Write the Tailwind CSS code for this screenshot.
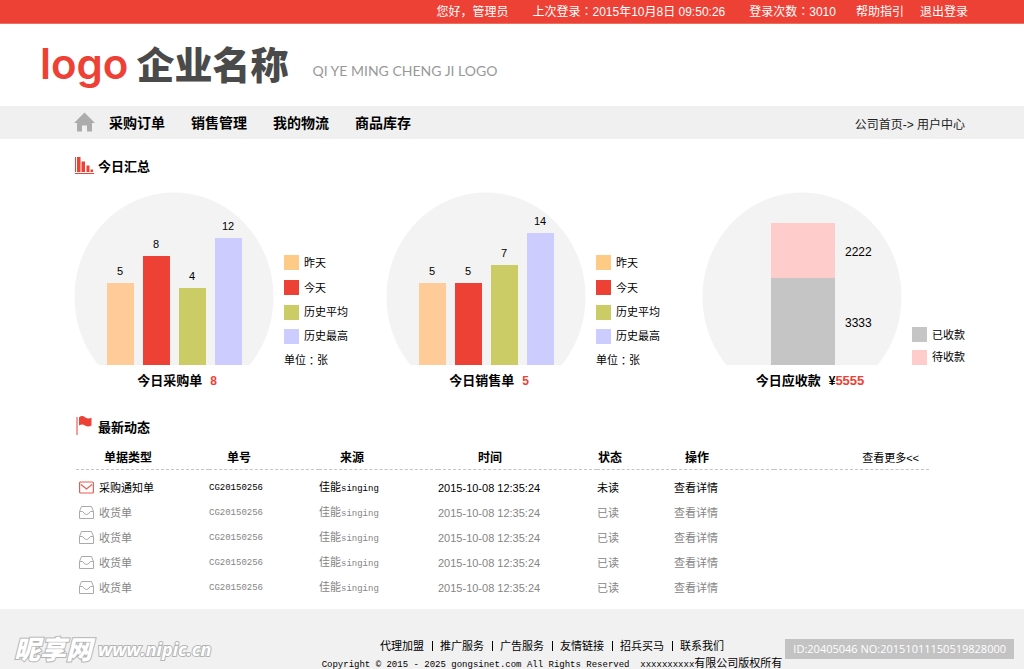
<!DOCTYPE html>
<html lang="zh-CN">
<head>
<meta charset="utf-8">
<meta name="viewport" content="width=device-width, initial-scale=1">
<title>用户中心</title>
<script src="https://cdn.jsdelivr.net/npm/@tailwindcss/browser@4"></script>
</head>
<body class="flex h-screen flex-col overflow-hidden bg-white font-['Liberation_Sans','Noto_Sans_CJK_SC',sans-serif] text-[11px] leading-4 text-black">

<svg class="hidden">
  <symbol id="tray" viewBox="0 0 15 13"><path d="M.5 5.500 2.500.5h10l2 5v7H.5ZM.5 5.500H3.500C4.500 5.500 4.800 8.500 7.500 8.500S10.500 5.500 11.500 5.500H14.500"/></symbol>
</svg>

<div class="flex h-6 shrink-0 items-center justify-end border-b border-[#f0705f] bg-[#ee4135] pr-14 text-xs text-white">
  <span class="mr-6">您好，管理员</span>
  <span class="mr-6">上次登录<span lang="zh-TW" class="font-['Noto_Sans_CJK_TC',sans-serif]">：</span>2015年10月8日 09:50:26</span>
  <span class="mr-5">登录次数<span lang="zh-TW" class="font-['Noto_Sans_CJK_TC',sans-serif]">：</span>3010</span>
  <a href="#" class="mr-4">帮助指引</a>
  <a href="#">退出登录</a>
</div>

<header class="flex h-[82px] shrink-0 items-center pl-10">
  <h1 class="flex items-center leading-none">
    <span class="pb-0.5 font-['Inter',sans-serif] text-[42px] font-semibold text-[#ee4135]">logo</span>
    <span class="ml-2 pb-1 font-['Noto_Sans_CJK_SC',sans-serif] text-[38px] font-black text-[#4a4a4a]">企业名称</span>
  </h1>
  <p class="ml-6 pt-3 font-['Lato',sans-serif] text-sm text-[#999]">QI YE MING CHENG JI LOGO</p>
</header>

<nav class="flex h-[33px] shrink-0 items-center bg-[#f0f0f0] pr-[59px] pl-[74px]">
  <a href="#" aria-label="首页" class="mr-3.5 pb-0.5">
    <svg class="h-5 w-[21px]" viewBox="0 0 21 20" fill="#acacac"><path d="M10.500.5 21 11H18V19.500H13V13.500H8V19.500H3V11H0Z"/></svg>
  </a>
  <div class="flex flex-1 gap-[26px] text-sm font-bold">
    <a href="#">采购订单</a><a href="#">销售管理</a><a href="#">我的物流</a><a href="#">商品库存</a>
  </div>
  <p class="pt-1 text-xs text-[#222]"><a href="#">公司首页</a>-&gt; <a href="#">用户中心</a></p>
</nav>

<main class="pl-[74px]">
  <section>
    <h2 class="flex h-[53px] items-center gap-1 pl-px text-[13px] font-bold">
      <svg class="h-[17px] w-[19px]" viewBox="0 0 19 17" fill="#ee4135"><path d="M0 0h1v15H0zM2 0h3.500v15H2zM6.500 4.500H10V15H6.500zM11.500 8.500h3V15h-3zM15.500 12.500h2.500V15h-2.500zM0 16h19v1H0z"/></svg>
      <span class="pt-0.5">今日汇总</span>
    </h2>
    <div class="grid grid-cols-[312fr_316fr_322fr]">
      <figure class="grid grid-cols-[200px_1fr] gap-x-2.5">
        <div class="flex h-[173px] items-end justify-center gap-[9px] bg-[radial-gradient(100px_105px_at_100px_105px,#f3f3f3_99%,transparent_100%)] text-center">
          <div class="w-[27px]">5<div class="mt-1 bg-[#ffcc99]" style="height:82px"></div></div>
          <div class="w-[27px]">8<div class="mt-1 bg-[#ee4135]" style="height:109px"></div></div>
          <div class="w-[27px]">4<div class="mt-1 bg-[#cccc66]" style="height:77px"></div></div>
          <div class="w-[27px]">12<div class="mt-1 bg-[#ccccff]" style="height:127px"></div></div>
        </div>
        <ul class="self-end">
          <li class="flex h-[25px] items-center gap-[5px]"><span class="size-[15px] bg-[#fdcb85]"></span>昨天</li>
          <li class="flex h-[25px] items-center gap-[5px]"><span class="size-[15px] bg-[#ee4135]"></span>今天</li>
          <li class="flex h-6 items-center gap-[5px]"><span class="size-[15px] bg-[#cccc66]"></span>历史平均</li>
          <li class="flex h-6 items-center gap-[5px]"><span class="size-[15px] bg-[#ccccff]"></span>历史最高</li>
          <li class="-mb-[7px] flex h-6 items-center">单位<span lang="zh-TW" class="font-['Noto_Sans_CJK_TC',sans-serif]">：</span>张</li>
        </ul>
        <figcaption class="pt-2 pl-1.5 text-center text-[13px] font-bold">今日采购单<span class="ml-2 text-xs text-[#ee4135]">8</span></figcaption>
      </figure>
      <figure class="grid grid-cols-[200px_1fr] gap-x-2.5">
        <div class="flex h-[173px] items-end justify-center gap-[9px] bg-[radial-gradient(100px_105px_at_100px_105px,#f3f3f3_99%,transparent_100%)] text-center">
          <div class="w-[27px]">5<div class="mt-1 bg-[#ffcc99]" style="height:82px"></div></div>
          <div class="w-[27px]">5<div class="mt-1 bg-[#ee4135]" style="height:82px"></div></div>
          <div class="w-[27px]">7<div class="mt-1 bg-[#cccc66]" style="height:100px"></div></div>
          <div class="w-[27px]">14<div class="mt-1 bg-[#ccccff]" style="height:132px"></div></div>
        </div>
        <ul class="self-end">
          <li class="flex h-[25px] items-center gap-[5px]"><span class="size-[15px] bg-[#fdcb85]"></span>昨天</li>
          <li class="flex h-[25px] items-center gap-[5px]"><span class="size-[15px] bg-[#ee4135]"></span>今天</li>
          <li class="flex h-6 items-center gap-[5px]"><span class="size-[15px] bg-[#cccc66]"></span>历史平均</li>
          <li class="flex h-6 items-center gap-[5px]"><span class="size-[15px] bg-[#ccccff]"></span>历史最高</li>
          <li class="-mb-[7px] flex h-6 items-center">单位<span lang="zh-TW" class="font-['Noto_Sans_CJK_TC',sans-serif]">：</span>张</li>
        </ul>
        <figcaption class="pt-2 pl-1.5 text-center text-[13px] font-bold">今日销售单<span class="ml-2 text-xs text-[#ee4135]">5</span></figcaption>
      </figure>
      <figure class="grid grid-cols-[200px_1fr] gap-x-2.5">
        <div class="flex h-[173px] flex-col justify-end bg-[radial-gradient(100px_105px_at_100px_105px,#f3f3f3_99%,transparent_100%)] pl-[69px] text-xs">
          <div class="flex items-center gap-2.5" style="height:55px"><span class="h-full w-16 bg-[#ffcccc]"></span><span class="pt-0.5">2222</span></div>
          <div class="flex items-center gap-2.5" style="height:87px"><span class="h-full w-16 bg-[#c5c5c5]"></span><span class="pt-0.5">3333</span></div>
        </div>
        <ul class="self-end">
          <li class="flex h-[23px] items-center gap-[5px]"><span class="size-[15px] bg-[#c5c5c5]"></span>已收款</li>
          <li class="flex h-[19px] items-end gap-[5px]"><span class="size-[15px] bg-[#ffcccc]"></span>待收款</li>
        </ul>
        <figcaption class="pt-2 pl-4 text-center text-[13px] font-bold">今日应收款<span class="ml-2 text-xs">¥</span><span class="text-[#ee4135]">5555</span></figcaption>
      </figure>
    </div>
  </section>

  <section class="pt-[19px]">
    <h2 class="flex h-[34px] items-center gap-1.5 pl-0.5 text-[13px] font-bold">
      <svg class="h-[19px] w-4" viewBox="0 0 16 19" fill="#ee4135"><path d="M.5 1h1v18h-1zM3 1.500C5.500-.5 7-.2 9 1.200s4 1.600 6.500.5V9.500C13 11 11 10.800 9 9.500S5.500 8 3 9.500Z"/></svg>
      <span class="pt-1.5">最新动态</span>
    </h2>
    <table class="mr-[95px] ml-0.5 w-[calc(100%-97px)] table-fixed text-left">
      <colgroup><col class="w-[133px]"><col class="w-[110px]"><col class="w-[119px]"><col class="w-[159px]"><col class="w-[77px]"><col class="w-[100px]"><col></colgroup>
      <thead>
        <tr class="h-[27px] border-b border-dashed border-[#c4c4c4] align-bottom text-xs">
          <th class="pb-[3px] pl-7">单据类型</th><th class="pb-[3px] pl-[18px]">单号</th><th class="pb-[3px] pl-[21px]">来源</th><th class="pb-[3px] pl-10">时间</th><th class="pb-[3px] pl-px">状态</th><th class="pb-[3px] pl-[11px]">操作</th>
          <td class="pr-2.5 pb-[3px] text-right text-[11px]"><a href="#">查看更多&lt;&lt;</a></td>
        </tr>
      </thead>
      <tbody class="text-[#858585]">
        <tr class="h-1.5"></tr>
        <tr class="h-[25px] text-black">
          <td><div class="flex items-center gap-[5px] pl-[3px]"><svg class="h-[13px] w-[15px]" viewBox="0 0 15 13" fill="none" stroke="#ee5a50" stroke-width="1.200"><rect x=".6" y="1" width="13.800" height="11" rx="1"/><path d="m2 3.500 5.500 4.500L13 3.500"/></svg>采购通知单</div></td>
          <td class="font-['Liberation_Mono',monospace] text-[9px]">CG20150256</td><td>佳能<span class="font-['Liberation_Mono',monospace] text-[9px]">singing</span></td><td>2015-10-08 12:35:24</td><td>未读</td><td><a href="#">查看详情</a></td><td></td>
        </tr>
        <tr class="h-[25px]">
          <td><div class="flex items-center gap-[5px] pl-[3px]"><svg class="h-[13px] w-[15px]" fill="none" stroke="#aaa"><use href="#tray"/></svg>收货单</div></td>
          <td class="font-['Liberation_Mono',monospace] text-[9px]">CG20150256</td><td>佳能<span class="font-['Liberation_Mono',monospace] text-[9px]">singing</span></td><td>2015-10-08 12:35:24</td><td>已读</td><td><a href="#">查看详情</a></td><td></td>
        </tr>
        <tr class="h-[25px]">
          <td><div class="flex items-center gap-[5px] pl-[3px]"><svg class="h-[13px] w-[15px]" fill="none" stroke="#aaa"><use href="#tray"/></svg>收货单</div></td>
          <td class="font-['Liberation_Mono',monospace] text-[9px]">CG20150256</td><td>佳能<span class="font-['Liberation_Mono',monospace] text-[9px]">singing</span></td><td>2015-10-08 12:35:24</td><td>已读</td><td><a href="#">查看详情</a></td><td></td>
        </tr>
        <tr class="h-[25px]">
          <td><div class="flex items-center gap-[5px] pl-[3px]"><svg class="h-[13px] w-[15px]" fill="none" stroke="#aaa"><use href="#tray"/></svg>收货单</div></td>
          <td class="font-['Liberation_Mono',monospace] text-[9px]">CG20150256</td><td>佳能<span class="font-['Liberation_Mono',monospace] text-[9px]">singing</span></td><td>2015-10-08 12:35:24</td><td>已读</td><td><a href="#">查看详情</a></td><td></td>
        </tr>
        <tr class="h-[25px]">
          <td><div class="flex items-center gap-[5px] pl-[3px]"><svg class="h-[13px] w-[15px]" fill="none" stroke="#aaa"><use href="#tray"/></svg>收货单</div></td>
          <td class="font-['Liberation_Mono',monospace] text-[9px]">CG20150256</td><td>佳能<span class="font-['Liberation_Mono',monospace] text-[9px]">singing</span></td><td>2015-10-08 12:35:24</td><td>已读</td><td><a href="#">查看详情</a></td><td></td>
        </tr>
      </tbody>
    </table>
  </section>
</main>

<footer class="relative mt-[9px] flex-1 bg-[#f1f1f1] pt-7 pl-20 text-center">
  <div class="flex h-[18px] items-center justify-center">
    <a href="#">代理加盟</a><span class="mr-[7px] ml-2 h-2.5 w-px bg-black"></span>
    <a href="#">推广服务</a><span class="mr-[7px] ml-2 h-2.5 w-px bg-black"></span>
    <a href="#">广告服务</a><span class="mr-[7px] ml-2 h-2.5 w-px bg-black"></span>
    <a href="#">友情链接</a><span class="mr-[7px] ml-2 h-2.5 w-px bg-black"></span>
    <a href="#">招兵买马</a><span class="mr-[7px] ml-2 h-2.5 w-px bg-black"></span>
    <a href="#">联系我们</a>
  </div>
  <p class="whitespace-pre"><span class="font-['Liberation_Mono',monospace] text-[9px]">Copyright © 2015 - 2025 gongsinet.com All Rights Reserved  xxxxxxxxxx</span>有限公司版权所有</p>

  <div class="absolute top-[26px] left-3.5 flex items-center gap-1.5 font-['Open_Sans','Noto_Sans_CJK_SC',sans-serif] leading-7 text-white italic [-webkit-text-stroke:2px_#b4b4b4] [paint-order:stroke]">
    <span class="text-[26px] leading-7 font-black">昵享网</span><span class="text-lg leading-7 font-bold">www.nipic.cn</span>
  </div>
  <div class="absolute top-[30px] right-2.5 bg-[#c3c3c3] px-2 font-['Open_Sans',sans-serif] text-[11px] leading-5 text-white">ID:20405046 NO:20151011150519828000</div>
</footer>
</body>
</html>
